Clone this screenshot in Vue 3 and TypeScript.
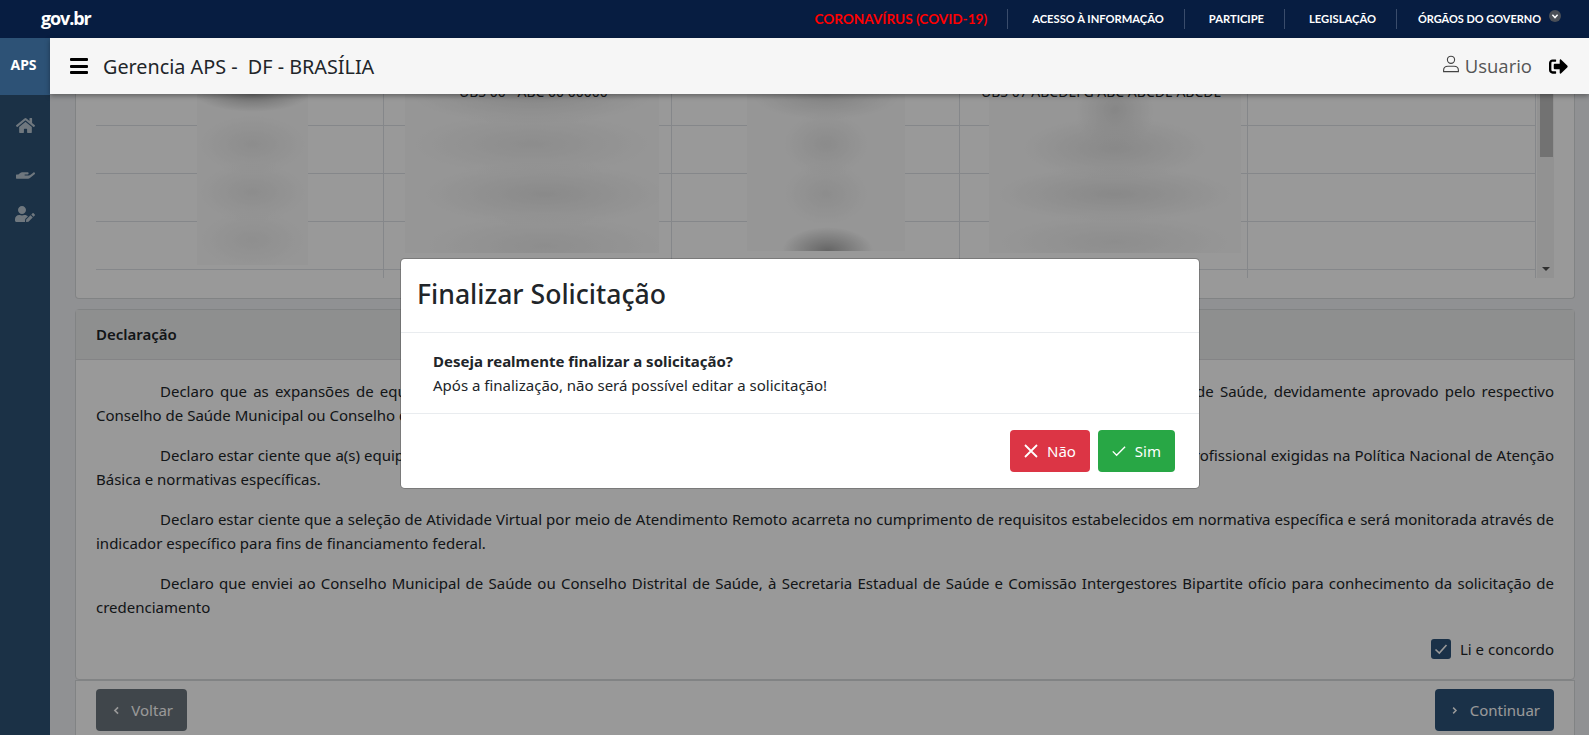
<script setup lang="ts">
const navLinks = ["ACESSO À INFORMAÇÃO", "PARTICIPE", "LEGISLAÇÃO"];

const tableRows = 5;
const tableCols = 5;

const declarations = [
  "Declaro que as expansões de equipes e/ou serviços solicitados já constam no Plano Municipal ou no Plano Distrital e na Programação Anual de Saúde, devidamente aprovado pelo respectivo Conselho de Saúde Municipal ou Conselho de Saúde do Distrito Federal.",
  "Declaro estar ciente que a(s) equipe(s) ou serviço(s) solicitado(s) deverá(ão) cumprir as cargas horárias mínimas e também atender a composição profissional exigidas na Política Nacional de Atenção Básica e normativas específicas.",
  "Declaro estar ciente que a seleção de Atividade Virtual por meio de Atendimento Remoto acarreta no cumprimento de requisitos estabelecidos em normativa específica e será monitorada através de indicador específico para fins de financiamento federal.",
  "Declaro que enviei ao Conselho Municipal de Saúde ou Conselho Distrital de Saúde, à Secretaria Estadual de Saúde e Comissão Intergestores Bipartite ofício para conhecimento da solicitação de credenciamento",
];
</script>

<template>
  <div class="page">
    <div class="topbar">
      <span class="logo">gov.br</span>
      <nav class="top-nav">
        <a class="covid">CORONAVÍRUS (COVID-19)</a>
        <a v-for="link in navLinks" :key="link" class="top-link">{{ link }}</a>
        <a class="top-link last">
          ÓRGÃOS DO GOVERNO
          <span class="chevron">
            <svg viewBox="0 0 12 12" width="12" height="12">
              <circle cx="6" cy="6" r="6" fill="#4a4f57" />
              <path d="M3.4 4.8 6 7.6l2.6-2.8" fill="none" stroke="#fff" stroke-width="1.4" />
            </svg>
          </span>
        </a>
      </nav>
    </div>

    <div class="shell">
      <aside class="sidebar">
        <div class="brand">APS</div>
        <div class="side-icon home">
          <svg viewBox="0 0 576 512" width="19" height="17" fill="currentColor">
            <path d="M280.37 148.26L96 300.11V464a16 16 0 0 0 16 16l112.06-.29a16 16 0 0 0 15.92-16V368a16 16 0 0 1 16-16h64a16 16 0 0 1 16 16v95.64a16 16 0 0 0 16 16.05L464 480a16 16 0 0 0 16-16V300L295.67 148.26a12.19 12.19 0 0 0-15.3 0zM571.6 251.47L488 182.56V44.05a12 12 0 0 0-12-12h-56a12 12 0 0 0-12 12v72.61L318.47 43a48 48 0 0 0-61 0L4.34 251.47a12 12 0 0 0-1.6 16.9l25.5 31A12 12 0 0 0 45.15 301l235.22-193.74a12.19 12.19 0 0 1 15.3 0L530.9 301a12 12 0 0 0 16.9-1.6l25.5-31a12 12 0 0 0-1.7-16.93z" />
          </svg>
        </div>
        <div class="side-icon hand">
          <svg viewBox="0 288 576 224" width="19" height="8" fill="currentColor">
            <path d="M565.3 328.1c-11.8-10.7-30.2-10-42.6 0L430.3 402c-11.3 9.1-25.4 14-40 14H272c-8.8 0-16-7.2-16-16s7.2-16 16-16h78.3c15.9 0 30.7-10.9 33.3-26.6 3.3-20-12.1-37.4-31.6-37.4H192c-27 0-53.1 9.3-74.1 26.3L71.4 384H16c-8.8 0-16 7.2-16 16v96c0 8.8 7.2 16 16 16h356.8c14.5 0 28.6-4.9 40-14l151.2-121c15.2-12.2 16.4-34.8 1.3-48.9z" />
          </svg>
        </div>
        <div class="side-icon editor">
          <svg viewBox="0 0 640 512" width="20" height="16" fill="currentColor">
            <path d="M224 256c70.7 0 128-57.3 128-128S294.7 0 224 0 96 57.3 96 128s57.3 128 128 128zm89.6 32h-16.7c-22.2 10.2-46.9 16-72.9 16s-50.6-5.8-72.9-16h-16.7C60.2 288 0 348.2 0 422.4V464c0 26.5 21.5 48 48 48h274.9c-2.4-6.8-3.4-14-2.6-21.3l6.8-60.9 1.2-11.1 7.9-7.9 77.3-77.3c-24.5-27.7-60-45.5-99.9-45.5zm45.3 145.3l-6.8 61c-1.1 10.2 7.5 18.8 17.6 17.6l60.9-6.8 137.9-137.9-71.7-71.7-137.9 137.8zM633 268.9L595.1 231c-9.3-9.3-24.5-9.3-33.8 0l-37.8 37.8-4.1 4.1 71.8 71.7 41.8-41.8c9.3-9.4 9.3-24.6 0-33.9z" />
          </svg>
        </div>
      </aside>

      <div class="main">
        <header class="app-header">
          <button class="menu-btn" aria-label="Menu">
            <span></span><span></span><span></span>
          </button>
          <h1 class="app-title">Gerencia APS -&nbsp; DF - BRASÍLIA</h1>
          <div class="user">
            <svg viewBox="0 0 18 18" width="18" height="18" fill="none" stroke="#444" stroke-width="1.1">
              <circle cx="9" cy="4.8" r="3.6" />
              <path d="M1.6 16.6v-1.4c0-2.6 2-4 4.4-4h6c2.4 0 4.4 1.4 4.4 4v1.4z" />
            </svg>
            <span>Usuario</span>
          </div>
          <svg class="logout" viewBox="0 0 512 512" width="19" height="19" fill="#000">
            <path d="M497 273L329 441c-15 15-41 4.5-41-17v-96H152c-13.3 0-24-10.7-24-24v-96c0-13.3 10.7-24 24-24h136V88c0-21.4 25.9-32 41-17l168 168c9.3 9.4 9.3 24.6 0 34zM192 436v-40c0-6.6-5.4-12-12-12H96c-17.7 0-32-14.3-32-32V160c0-17.7 14.3-32 32-32h84c6.6 0 12-5.4 12-12V76c0-6.6-5.4-12-12-12H96c-53 0-96 43-96 96v192c0 53 43 96 96 96h84c6.6 0 12-5.4 12-12z" />
          </svg>
        </header>

        <div class="content">
          <section class="card table-card">
            <div class="table-wrap">
              <div class="grid">
                <template v-for="r in tableRows" :key="r">
                  <div v-for="c in tableCols" :key="c" class="cell"></div>
                </template>
              </div>
              <div class="scrollbar">
                <div class="thumb"></div>
                <div class="arrow"></div>
              </div>
              <div class="mask mask-1"></div>
              <div class="mask mask-2"><span class="scrap scrap-a">UBS 00 - ABC 00 00000</span></div>
              <div class="mask mask-3"></div>
              <div class="mask mask-4"><span class="scrap scrap-b">UBS 07 ABCDEFG ABC ABCDE ABCDE</span></div>
            </div>
          </section>

          <section class="card declaration">
            <div class="card-head">Declaração</div>
            <div class="card-body">
              <p v-for="text in declarations" :key="text">{{ text }}</p>
              <label class="agree">
                <span class="check">
                  <svg viewBox="0 0 20 20" width="20" height="20" fill="none" stroke="#fff" stroke-width="1.6">
                    <path d="M4.5 10.5 8.3 14l7.2-8" />
                  </svg>
                </span>
                Li e concordo
              </label>
            </div>
          </section>

          <section class="card actions">
            <button class="btn btn-back">
              <svg viewBox="0 0 10 14" width="9" height="13" fill="none" stroke="currentColor" stroke-width="2.6">
                <path d="M8 2 3 7l5 5" />
              </svg>
              Voltar
            </button>
            <button class="btn btn-next">
              <svg viewBox="0 0 10 14" width="9" height="13" fill="none" stroke="currentColor" stroke-width="2.6">
                <path d="m2 2 5 5-5 5" />
              </svg>
              Continuar
            </button>
          </section>
        </div>
      </div>
    </div>

    <div class="overlay">
      <div class="modal">
        <div class="modal-head">Finalizar Solicitação</div>
        <div class="modal-body">
          <strong>Deseja realmente finalizar a solicitação?</strong>
          <span>Após a finalização, não será possível editar a solicitação!</span>
        </div>
        <div class="modal-foot">
          <button class="btn btn-no">
            <svg viewBox="0 0 14 14" width="14" height="14" fill="none" stroke="currentColor" stroke-width="1.8">
              <path d="m1 1 12 12M13 1 1 13" />
            </svg>
            Não
          </button>
          <button class="btn btn-yes">
            <svg viewBox="0 0 18 14" width="18" height="14" fill="none" stroke="currentColor" stroke-width="1.8">
              <path d="m1 7.5 5 5L17 1.5" />
            </svg>
            Sim
          </button>
        </div>
      </div>
    </div>
  </div>
</template>

<style>
html,
body {
  margin: 0;
  height: 100%;
  overflow: hidden;
}
</style>

<style scoped>
.page {
  position: relative;
  display: flex;
  flex-direction: column;
  height: 735px;
  overflow: hidden;
  background: #f0f2f5;
  color: #212529;
  font-family: "Noto Sans", "Open Sans", sans-serif;
  font-size: 15px;
  line-height: 24px;
}

.topbar {
  position: relative;
  z-index: 3;
  display: flex;
  align-items: center;
  justify-content: space-between;
  flex: 0 0 38px;
  padding: 0 28px 0 41px;
  background: #071d41;
  color: #fff;
}

.logo {
  font-family: "Open Sans", sans-serif;
  font-size: 18px;
  font-weight: 700;
  letter-spacing: -1.1px;
  margin-top: -2px;
}

.top-nav {
  display: flex;
  align-items: center;
  font-family: "Lato", sans-serif;
  font-weight: 700;
  font-size: 11.2px;
}

.covid {
  padding-right: 20px;
  color: #ff0000;
  font-size: 13.6px;
}

.top-link {
  display: flex;
  align-items: center;
  height: 20px;
  padding: 0 20px 0 24px;
  border-left: 1px solid #3a4c6b;
}

.top-link.last {
  padding-right: 0;
  padding-left: 21px;
  font-size: 10.95px;
}

.chevron {
  display: flex;
  margin: -6px 0 0 8px;
}

.shell {
  display: flex;
  flex: 1;
  min-height: 0;
}

.sidebar {
  flex: 0 0 50px;
  background: #2d5276;
  color: #b9c7d2;
}

.brand {
  position: relative;
  z-index: 3;
  height: 57px;
  padding: 15px 3px 0 0;
  box-sizing: border-box;
  background: #2d5276;
  color: #fff;
  font-weight: 700;
  font-size: 14px;
  text-align: center;
}

.side-icon {
  display: flex;
  justify-content: center;
}

.home {
  margin-top: 22px;
}

.hand {
  margin-top: 37px;
}

.editor {
  margin-top: 27px;
}

.main {
  display: flex;
  flex: 1;
  flex-direction: column;
  min-width: 0;
}

.app-header {
  position: relative;
  z-index: 3;
  display: flex;
  align-items: center;
  flex: 0 0 56px;
  padding: 0 21px 0 20px;
  background: #f6f6f6;
  box-shadow: 0 2px 5px rgba(0, 0, 0, 0.35);
}

.menu-btn {
  display: flex;
  flex-direction: column;
  justify-content: space-between;
  width: 18px;
  height: 16px;
  margin-right: 15px;
  padding: 0;
  border: none;
  background: none;
}

.menu-btn span {
  height: 3px;
  background: #000;
  border-radius: 1px;
}

.app-title {
  margin: 2px 0 0;
  font-size: 19.8px;
  font-weight: 400;
}

.user {
  display: flex;
  align-items: center;
  gap: 5px;
  margin-left: auto;
  margin-right: 17px;
  font-family: "Open Sans", sans-serif;
  font-size: 18.5px;
  color: #555;
}

.user svg {
  margin-top: -5px;
}

.content {
  flex: 1;
  padding: 0 14px 0 25px;
  overflow: hidden;
}

.card {
  box-sizing: border-box;
  width: 1500px;
  background: #fff;
  border: 1px solid #d8dadc;
  border-radius: 4px;
}

.table-card {
  padding: 0 20px 20px;
  border-top: none;
  border-radius: 0 0 4px 4px;
  margin-bottom: 10px;
}

.table-wrap {
  position: relative;
  display: flex;
  height: 184px;
  overflow: hidden;
}

.grid {
  display: grid;
  grid-template-columns: repeat(5, 288px);
  grid-template-rows: 32px;
  grid-auto-rows: 48px;
  align-content: start;
  border-left: 1px solid #dee2e6;
  margin-left: -1px;
}

.cell {
  box-sizing: border-box;
  border-right: 1px solid #dee2e6;
  border-bottom: 1px solid #dee2e6;
}

.scrollbar {
  position: relative;
  width: 18px;
  margin-left: 1px;
  background: #f4f4f4;
}

.thumb {
  position: absolute;
  top: 0;
  left: 3px;
  width: 13px;
  height: 63px;
  background: #bebebe;
}

.arrow {
  position: absolute;
  left: 5px;
  bottom: 7px;
  border-left: 4px solid transparent;
  border-right: 4px solid transparent;
  border-top: 4px solid #505050;
}

.mask {
  position: absolute;
  top: 0;
  background: #fbfbfb;
}

.mask-1 {
  left: 101px;
  width: 111px;
  height: 171px;
  background:
    radial-gradient(ellipse 58px 18px at 50% 0, #b4b4b4, transparent),
    radial-gradient(ellipse 56px 30px at 50% 50px, #ebebeb, transparent),
    radial-gradient(ellipse 56px 30px at 50% 98px, #ebebeb, transparent),
    radial-gradient(ellipse 56px 30px at 50% 146px, #eeeeee, transparent),
    #fbfbfb;
}

.mask-2 {
  left: 309px;
  width: 254px;
  height: 159px;
  background:
    radial-gradient(ellipse 125px 30px at 50% 0, #e0e0e0, transparent),
    radial-gradient(ellipse 125px 32px at 50% 50px, #ebebeb, transparent),
    radial-gradient(ellipse 125px 32px at 55% 100px, #e6e6e6, transparent),
    radial-gradient(ellipse 125px 32px at 55% 152px, #ececec, transparent),
    #fbfbfb;
}

.mask-3 {
  left: 651px;
  width: 158px;
  height: 157px;
  background:
    radial-gradient(ellipse 75px 24px at 50% 2px, #dcdcdc, transparent),
    radial-gradient(ellipse 44px 32px at 50% 50px, #e8e8e8, transparent),
    radial-gradient(ellipse 44px 32px at 50% 100px, #ebebeb, transparent),
    radial-gradient(ellipse 46px 24px at 51% 157px, #a8a8a8, transparent),
    #fbfbfb;
}

.mask-4 {
  left: 893px;
  width: 252px;
  height: 159px;
  background:
    radial-gradient(ellipse 40px 38px at 50% 16px, #e0e0e0, transparent),
    radial-gradient(ellipse 95px 32px at 50% 54px, #e4e4e4, transparent),
    radial-gradient(ellipse 122px 28px at 50% 100px, #e4e4e4, transparent),
    radial-gradient(ellipse 122px 28px at 50% 148px, #ececec, transparent),
    #fbfbfb;
}

.scrap {
  position: absolute;
  top: -14px;
  font-size: 14px;
  white-space: nowrap;
}

.scrap-a {
  left: 54px;
}

.scrap-b {
  left: -8px;
}

.card-head {
  height: 49px;
  padding: 0 20px;
  line-height: 49px;
  font-weight: 600;
  background: #edeeef;
  border-bottom: 1px solid #dcdddf;
}

.declaration {
  height: 371px;
  border-radius: 4px;
}

.card-body {
  padding: 19px 20px 0;
}

.card-body p {
  margin: 0 0 16px;
  text-align: justify;
  text-indent: 64px;
}

.agree {
  display: flex;
  align-items: center;
  justify-content: flex-end;
  gap: 9px;
  margin-top: 18px;
}

.check {
  display: flex;
  width: 20px;
  height: 20px;
  background: #2c5278;
  border-radius: 3px;
}

.actions {
  display: flex;
  justify-content: space-between;
  height: 60px;
  padding: 8px 20px 0;
  border-bottom: none;
  border-radius: 0;
}

.btn {
  display: inline-flex;
  align-items: center;
  height: 42px;
  padding: 0 14px;
  border: none;
  border-radius: 4px;
  color: #fff;
  font: inherit;
}

.btn-back {
  gap: 12px;
  padding-left: 17px;
  width: 91px;
  background: #6c757d;
}

.btn-next {
  gap: 12px;
  padding-left: 17px;
  width: 119px;
  background: #2c5278;
}

.overlay {
  position: absolute;
  inset: 0;
  z-index: 2;
  background: rgba(0, 0, 0, 0.4);
}

.modal {
  box-sizing: border-box;
  width: 800px;
  margin: 258px 0 0 400px;
  background: #fff;
  border: 1px solid rgba(0, 0, 0, 0.2);
  border-radius: 4.8px;
  background-clip: padding-box;
}

.modal-head {
  padding: 16px;
  height: 74px;
  box-sizing: border-box;
  border-bottom: 1px solid #e9ecef;
  font-size: 26.6px;
  line-height: 38px;
  font-weight: 500;
}

.modal-body {
  display: flex;
  flex-direction: column;
  padding: 16px 32px;
  border-bottom: 1px solid #e9ecef;
}

.modal-foot {
  display: flex;
  justify-content: flex-end;
  gap: 8px;
  padding: 16px 24px 16px 16px;
}

.btn-no {
  gap: 9px;
  width: 80px;
  background: #dc3545;
}

.btn-yes {
  gap: 9px;
  width: 77px;
  background: #28a745;
}
</style>
